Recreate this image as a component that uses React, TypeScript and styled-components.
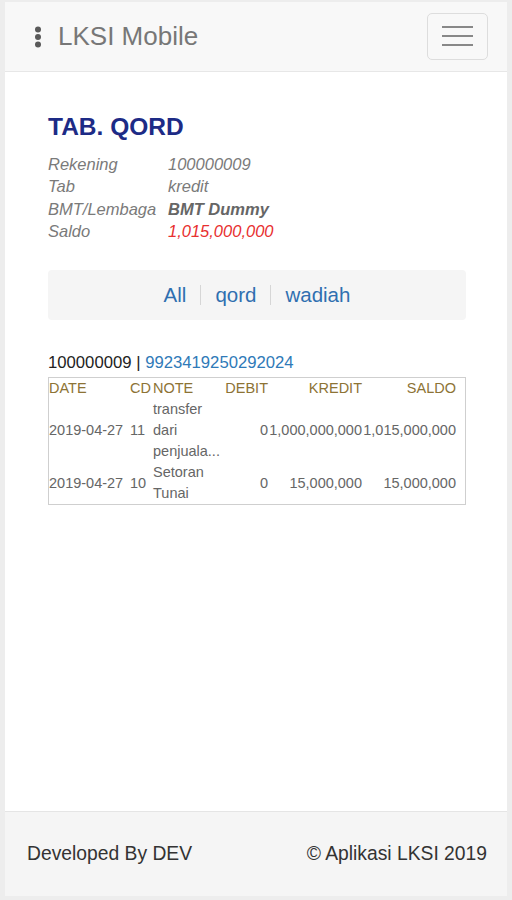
import React from 'react';
import styled, { createGlobalStyle } from 'styled-components';

const GlobalStyle = createGlobalStyle`
  html, body {
    margin: 0;
    padding: 0;
    background-color: #ededed;
    font-family: 'Liberation Sans', Arial, sans-serif;
  }
`;

const Frame = styled.div`
  margin: 2px 5px 0;
  height: 894px;
  display: flex;
  flex-direction: column;
  background-color: #ffffff;
`;

const NavBar = styled.div`
  height: 69px;
  display: flex;
  align-items: center;
  justify-content: space-between;
  padding: 0 19px 0 29px;
  background-color: #f8f8f8;
  border-bottom: 1px solid #e7e7e7;
`;

const Brand = styled.div`
  display: flex;
  align-items: center;
  gap: 16px;
  color: #777777;
  font-size: 26px;
`;

const Toggle = styled.button`
  width: 61px;
  height: 47px;
  margin-bottom: 1px;
  display: flex;
  flex-direction: column;
  align-items: center;
  justify-content: center;
  gap: 6.5px;
  background: transparent;
  border: 1px solid #dddddd;
  border-radius: 5px;
  padding: 0;
`;

const Bar = styled.span`
  display: block;
  width: 31px;
  height: 2.5px;
  background-color: #888888;
`;

const Main = styled.div`
  flex: 1;
  padding: 0 41px 0 43px;
`;

const Title = styled.h1`
  margin: 42px 0 13px;
  font-size: 24.5px;
  font-weight: bold;
  line-height: 26px;
  color: #1d2b86;
`;

const InfoGrid = styled.div`
  display: grid;
  grid-template-columns: 120px 1fr;
  font-size: 16.5px;
  line-height: 22.3px;
  font-style: italic;
  color: #7a7a7a;
`;

const Value = styled.div<{ $tone?: 'bold' | 'red' }>`
  font-weight: ${p => (p.$tone === 'bold' ? 'bold' : 'normal')};
  color: ${p => (p.$tone === 'red' ? '#e8302f' : p.$tone === 'bold' ? '#666666' : '#7a7a7a')};
`;

const Pills = styled.div`
  margin-top: 28px;
  height: 50px;
  display: flex;
  align-items: center;
  justify-content: center;
  gap: 14px;
  background-color: #f5f5f5;
  border-radius: 4px;
  font-size: 20.5px;
`;

const PillLink = styled.span`
  color: #2f6fb0;
`;

const Sep = styled.span`
  width: 1px;
  height: 20px;
  background-color: #d6d6d6;
`;

const AccountLine = styled.div`
  margin-top: 33px;
  font-size: 16.7px;
  line-height: 20px;
  color: #222222;

  & > span {
    color: #2f7ab8;
  }
`;

const TableBox = styled.div`
  margin-top: 4px;
  border: 1px solid #cfcfcf;
  padding-right: 10px;
`;

const Table = styled.table`
  width: 407px;
  table-layout: fixed;
  border-collapse: collapse;
  font-size: 14.5px;
  color: #666666;
`;

const Th = styled.th<{ $align?: 'left' | 'right' }>`
  padding: 0;
  height: 21px;
  line-height: 21px;
  font-weight: normal;
  text-align: ${p => p.$align ?? 'right'};
  color: #8d7335;
`;

const Td = styled.td<{ $align?: 'left' | 'right' }>`
  padding: 0;
  line-height: 21px;
  vertical-align: middle;
  white-space: nowrap;
  text-align: ${p => p.$align ?? 'right'};
`;

const NoteTd = styled.td`
  padding: 0 0 0 3px;
  line-height: 21px;
  vertical-align: middle;
  text-align: left;
  white-space: normal;
`;

const Footer = styled.div`
  height: 84px;
  display: flex;
  align-items: center;
  justify-content: space-between;
  padding: 0 20px 0 22px;
  background-color: #f5f5f5;
  border-top: 1px solid #e5e5e5;
  font-size: 19.3px;
  color: #333333;
`;

const DotsIcon = () => (
  <svg width="8" height="22" viewBox="0 0 8 22">
    <circle cx="4" cy="3.5" r="3" fill="#5a5a5a" />
    <circle cx="4" cy="11" r="3" fill="#5a5a5a" />
    <circle cx="4" cy="18.5" r="3" fill="#5a5a5a" />
  </svg>
);

const rows = [
  { date: '2019-04-27', cd: '11', note: 'transfer dari penjuala...', debit: '0', kredit: '1,000,000,000', saldo: '1,015,000,000' },
  { date: '2019-04-27', cd: '10', note: 'Setoran Tunai', debit: '0', kredit: '15,000,000', saldo: '15,000,000' },
];

const App = () => {
  return (
    <>
      <GlobalStyle />
      <Frame>
        <NavBar>
          <Brand>
            <DotsIcon />
            <span>LKSI Mobile</span>
          </Brand>
          <Toggle aria-label="menu">
            <Bar />
            <Bar />
            <Bar />
          </Toggle>
        </NavBar>
        <Main>
          <Title>TAB. QORD</Title>
          <InfoGrid>
            <div>Rekening</div>
            <Value>100000009</Value>
            <div>Tab</div>
            <Value>kredit</Value>
            <div>BMT/Lembaga</div>
            <Value $tone="bold">BMT Dummy</Value>
            <div>Saldo</div>
            <Value $tone="red">1,015,000,000</Value>
          </InfoGrid>
          <Pills>
            <PillLink>All</PillLink>
            <Sep />
            <PillLink>qord</PillLink>
            <Sep />
            <PillLink>wadiah</PillLink>
          </Pills>
          <AccountLine>
            100000009 | <span>9923419250292024</span>
          </AccountLine>
          <TableBox>
            <Table>
              <colgroup>
                <col style={{ width: 81 }} />
                <col style={{ width: 20 }} />
                <col style={{ width: 72 }} />
                <col style={{ width: 46 }} />
                <col style={{ width: 94 }} />
                <col style={{ width: 94 }} />
              </colgroup>
              <thead>
                <tr>
                  <Th $align="left">DATE</Th>
                  <Th $align="left">CD</Th>
                  <Th $align="left" style={{ paddingLeft: 3 }}>NOTE</Th>
                  <Th>DEBIT</Th>
                  <Th>KREDIT</Th>
                  <Th>SALDO</Th>
                </tr>
              </thead>
              <tbody>
                {rows.map(r => (
                  <tr key={r.cd}>
                    <Td $align="left">{r.date}</Td>
                    <Td $align="left">{r.cd}</Td>
                    <NoteTd>{r.note}</NoteTd>
                    <Td>{r.debit}</Td>
                    <Td>{r.kredit}</Td>
                    <Td>{r.saldo}</Td>
                  </tr>
                ))}
              </tbody>
            </Table>
          </TableBox>
        </Main>
        <Footer>
          <span>Developed By DEV</span>
          <span>© Aplikasi LKSI 2019</span>
        </Footer>
      </Frame>
    </>
  );
};

export default App;
